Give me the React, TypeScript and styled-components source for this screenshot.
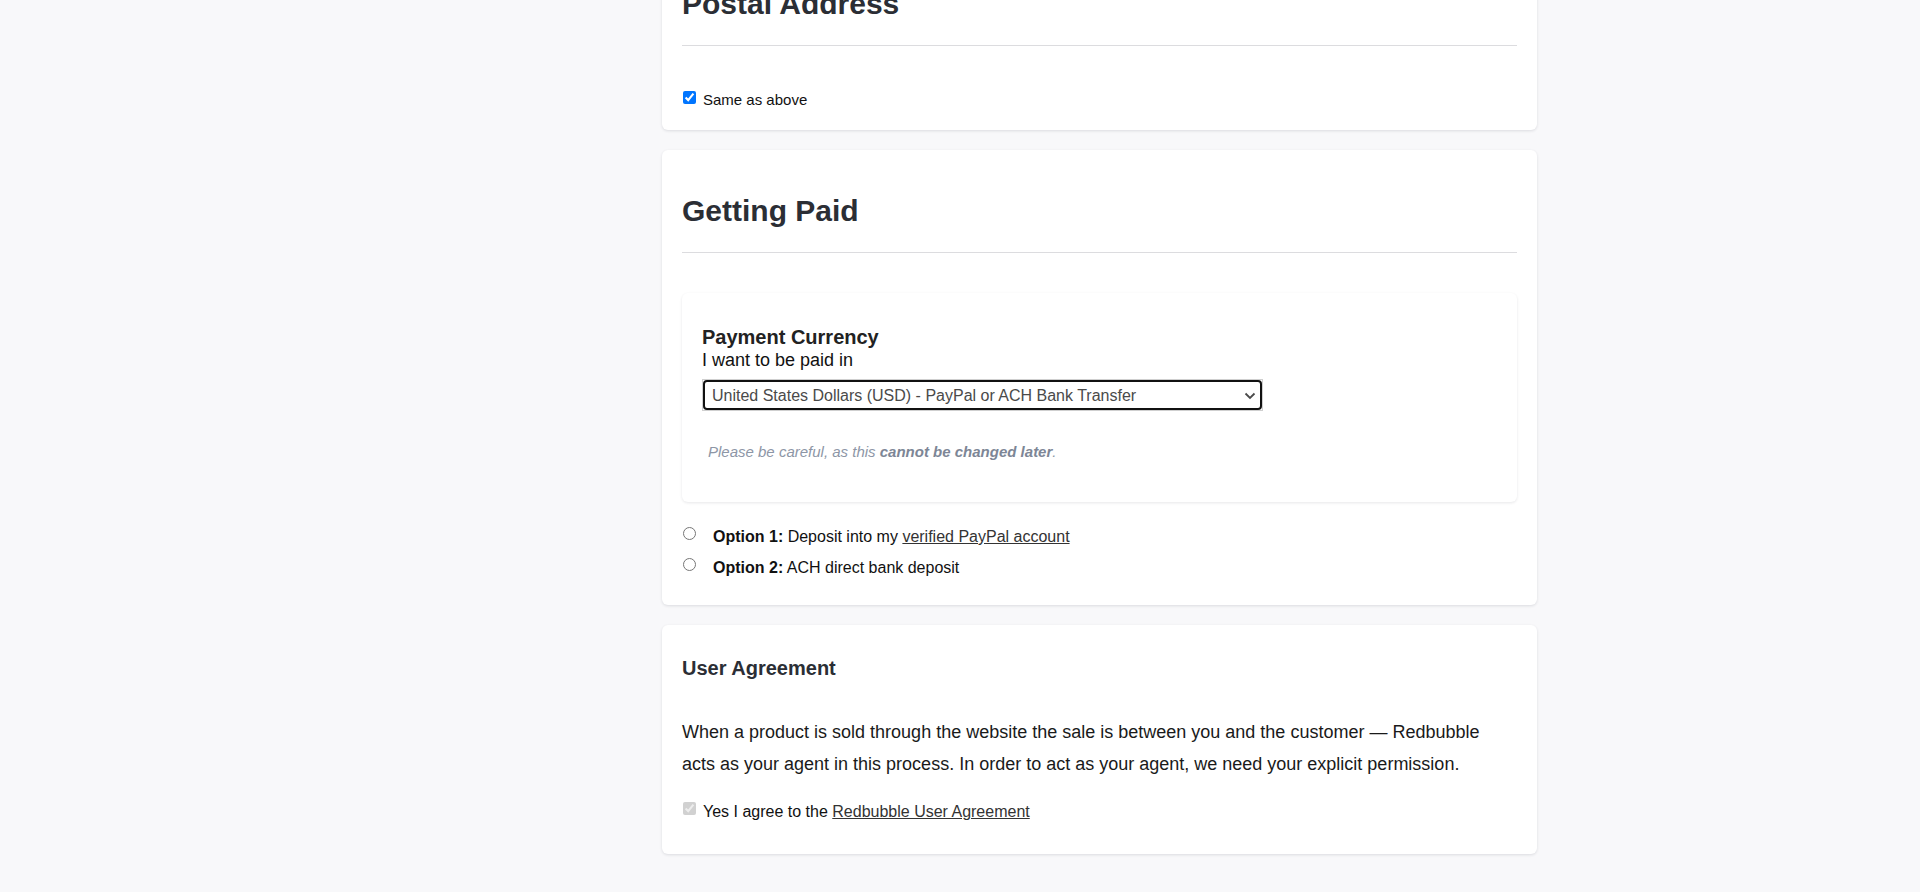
import React from "react";
import styled, { createGlobalStyle } from "styled-components";

const GlobalStyle = createGlobalStyle`
  html {
    overflow-y: scroll;
  }
  body {
    margin: 0;
    background: #f8f8fa;
    font-family: "Liberation Sans", Arial, sans-serif;
    color: #222;
  }
`;

const App = () => {
  return (
    <Page>
      <GlobalStyle />
      <Column>
        <Card>
          <SectionTitle>Postal Address</SectionTitle>
          <Divider />
          <CheckRow $size={15} $top={45} $bottom={1}>
            <Check type="checkbox" defaultChecked />
            <span>Same as above</span>
          </CheckRow>
        </Card>

        <Card>
          <SectionTitle>Getting Paid</SectionTitle>
          <Divider />
          <CurrencyBox>
            <FieldLabel>Payment Currency</FieldLabel>
            <FieldHint>I want to be paid in</FieldHint>
            <SelectFrame>
              <CurrencySelect defaultValue="usd">
                <option value="usd">
                  United States Dollars (USD) - PayPal or ACH Bank Transfer
                </option>
              </CurrencySelect>
              <Chevron width="12" height="8" viewBox="0 0 12 8">
                <path d="M1.5 1.5 L6 6 L10.5 1.5" fill="none" stroke="#4a4a4a" strokeWidth="1.8" />
              </Chevron>
            </SelectFrame>
            <Note>
              Please be careful, as this <strong>cannot be changed later</strong>.
            </Note>
          </CurrencyBox>
          <OptionList>
            <OptionRow>
              <Radio type="radio" name="payout" />
              <span>
                <b>Option 1:</b> Deposit into my <TextLink href="#">verified PayPal account</TextLink>
              </span>
            </OptionRow>
            <OptionRow>
              <Radio type="radio" name="payout" />
              <span>
                <b>Option 2:</b> ACH direct bank deposit
              </span>
            </OptionRow>
          </OptionList>
        </Card>

        <Card>
          <SubTitle>User Agreement</SubTitle>
          <Body>
            When a product is sold through the website the sale is between you and the customer — Redbubble
            acts as your agent in this process. In order to act as your agent, we need your explicit permission.
          </Body>
          <CheckRow $size={16} $top={22} $bottom={12}>
            <Check type="checkbox" defaultChecked disabled />
            <span>
              Yes I agree to the <TextLink href="#">Redbubble User Agreement</TextLink>
            </span>
          </CheckRow>
        </Card>
      </Column>
    </Page>
  );
};

export default App;

const Page = styled.div`
  min-height: 100vh;
  overflow: hidden;
`;

// the screenshot is taken scrolled part way down the form
const Column = styled.main`
  display: flex;
  flex-direction: column;
  gap: 20px;
  width: 875px;
  margin: -57px 0 40px 662px;
`;

const Card = styled.section`
  background: #fff;
  border-radius: 6px;
  box-shadow: 0 1px 3px rgba(20, 24, 40, 0.12);
  padding: 20px;
`;

const SectionTitle = styled.h2`
  margin: 24px 0;
  font-size: 30px;
  line-height: 34px;
  font-weight: 700;
  color: #2b2e35;
`;

const Divider = styled.hr`
  margin: 0;
  border: 0;
  border-top: 1px solid #dcdcdf;
`;

const CheckRow = styled.label<{ $size: number; $top: number; $bottom: number }>`
  display: flex;
  align-items: flex-start;
  margin: ${(p) => p.$top}px 0 ${(p) => p.$bottom}px;
  font-size: ${(p) => p.$size}px;
  line-height: ${(p) => (p.$size === 15 ? 18 : 20)}px;
  color: #111;
`;

const Check = styled.input`
  width: 13px;
  height: 13px;
  margin: 0 7px 0 1px;
  flex-shrink: 0;
`;

const CurrencyBox = styled.div`
  margin-top: 40px;
  padding: 32px 20px;
  border-radius: 6px;
  background: #fff;
  box-shadow: 0 1px 3px rgba(20, 24, 40, 0.1);
`;

const FieldLabel = styled.div`
  font-size: 20px;
  line-height: 24px;
  font-weight: 700;
  color: #222;
`;

const FieldHint = styled.div`
  font-size: 18px;
  line-height: 22px;
  color: #111;
`;

const SelectFrame = styled.div`
  position: relative;
  width: 559px;
  margin-top: 8px;
  border: 1px solid #cfcfcf;
`;

const CurrencySelect = styled.select`
  display: block;
  width: 100%;
  height: 30px;
  appearance: none;
  border: 2px solid #111;
  border-radius: 4px;
  background: #fff;
  padding: 0 30px 0 7px;
  font-family: "Liberation Sans", Arial, sans-serif;
  font-size: 16px;
  color: #4a4a4a;
  outline: none;
`;

const Chevron = styled.svg`
  position: absolute;
  right: 6px;
  top: 12px;
  pointer-events: none;
`;

const Note = styled.p`
  margin: 32px 0 9px 6px;
  font-size: 15px;
  line-height: 18px;
  font-style: italic;
  color: #8d96a6;

  strong {
    color: #7d8696;
  }
`;

const OptionList = styled.div`
  display: flex;
  flex-direction: column;
  gap: 11px;
  margin: 25px 0 7px;
`;

const OptionRow = styled.label`
  display: flex;
  align-items: flex-start;
  font-size: 16px;
  line-height: 20px;
  color: #111;

  b {
    font-weight: 700;
  }
`;

const Radio = styled.input`
  width: 13px;
  height: 13px;
  margin: 0 17px 0 1px;
  flex-shrink: 0;
`;

const TextLink = styled.a`
  color: #333;
  text-decoration: underline;
`;

const SubTitle = styled.h3`
  margin: 11px 0 0;
  font-size: 20px;
  line-height: 24px;
  font-weight: 700;
  color: #2b2e35;
`;

const Body = styled.p`
  margin: 36px 0 0;
  font-size: 18px;
  line-height: 32px;
  color: #1a1a1a;
`;
